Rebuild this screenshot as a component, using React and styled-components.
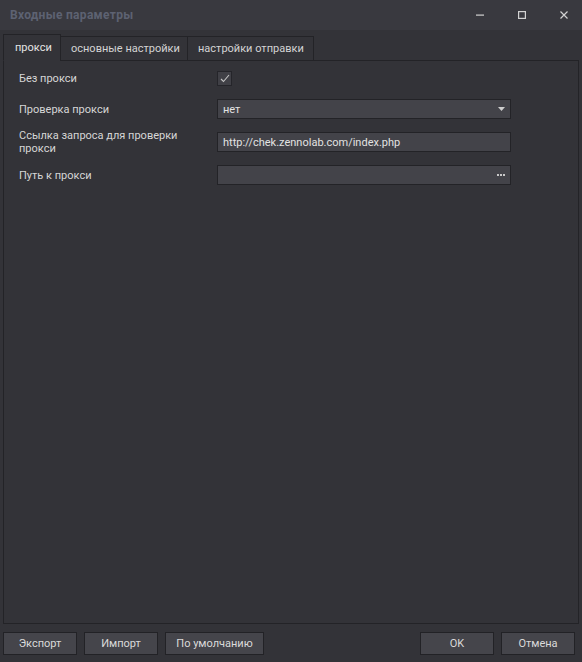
import React from "react";
import styled, { createGlobalStyle } from "styled-components";

const Global = createGlobalStyle`
  html, body { margin: 0; padding: 0; background: #333338; }
  * { box-sizing: border-box; }
  body { font-family: Roboto, "Noto Sans", sans-serif; font-size: 11px; color: #d8d8d8; }
`;

const Window = styled.div`
  width: 582px;
  height: 662px;
  display: flex;
  flex-direction: column;
  background: #333338;
`;

const TitleBar = styled.div`
  height: 30px;
  flex: none;
  background: #39393f;
  display: flex;
  align-items: center;
  justify-content: space-between;
  padding: 0 14px 0 10px;
`;

const Title = styled.div`
  font-weight: bold;
  font-size: 12px;
  color: #5d6272;
  letter-spacing: 0.3px;
`;

const Controls = styled.div`
  display: flex;
  gap: 34px;
  align-items: center;
`;

const Ctrl = styled.svg`
  width: 8px;
  height: 8px;
  display: block;
`;

const Body = styled.div`
  flex: 1;
  display: flex;
  flex-direction: column;
  padding: 4px 3px 0 3px;
  min-height: 0;
`;

const TabRow = styled.div`
  display: flex;
  align-items: flex-end;
  height: 27px;
  flex: none;
  position: relative;
  z-index: 1;
  margin-bottom: -1px;
`;

const Tab = styled.div`
  width: ${(p) => p.$w}px;
  height: ${(p) => (p.$active ? 27 : 25)}px;
  border: 1px solid #232327;
  border-bottom: ${(p) => (p.$active ? "1px solid #333338" : "1px solid #232327")};
  background: #333338;
  display: flex;
  align-items: center;
  padding-left: ${(p) => p.$pad}px;
  padding-bottom: ${(p) => (p.$active ? 1 : 0)}px;
  color: ${(p) => (p.$active ? "#e4e4e4" : "#d4d4d4")};
  white-space: nowrap;
  margin-left: ${(p) => (p.$first ? 0 : -1)}px;
`;

const Panel = styled.div`
  flex: 1;
  border: 1px solid #232327;
  padding: 10px 0 0 15px;
  display: flex;
  flex-direction: column;
  gap: 13px;
`;

const Row = styled.div`
  display: flex;
  align-items: center;
  height: ${(p) => p.$h || 20}px;
`;

const Label = styled.div`
  width: 198px;
  flex: none;
  color: #d6d6d6;
  line-height: 13px;
`;

const Check = styled.div`
  width: 15px;
  height: 15px;
  border: 1px solid #25252a;
  background: #404046;
  display: flex;
  align-items: center;
  justify-content: center;
`;

const Field = styled.div`
  width: 294px;
  height: 20px;
  border: 1px solid #232327;
  background: #434349;
  display: flex;
  align-items: center;
  justify-content: space-between;
  padding: 0 5px 0 5px;
  color: #e2e2e2;
`;

const Dots = styled.div`
  display: flex;
  gap: 1px;
`;

const Dot = styled.span`
  width: 2px;
  height: 2px;
  background: #c8c8c8;
  display: block;
`;

const Footer = styled.div`
  flex: none;
  display: flex;
  align-items: center;
  padding: 8px 4px 7px 0;
  gap: 7px;
`;

const Spacer = styled.div`
  flex: 1;
`;

const Button = styled.div`
  width: ${(p) => p.$w || 74}px;
  height: 23px;
  border: 1px solid #222226;
  background: #45454b;
  color: #dadada;
  display: flex;
  align-items: center;
  justify-content: center;
`;

export default function App() {
  return (
    <>
      <Global />
      <Window>
        <TitleBar>
          <Title>Входные параметры</Title>
          <Controls>
            <Ctrl viewBox="0 0 8 8">
              <rect x="0" y="3.5" width="8" height="1.2" fill="#d2d2d2" />
            </Ctrl>
            <Ctrl viewBox="0 0 8 8">
              <rect x="0.6" y="0.6" width="6.8" height="6.8" fill="none" stroke="#d2d2d2" strokeWidth="1.2" />
            </Ctrl>
            <Ctrl viewBox="0 0 8 8">
              <path d="M0.5 0.5 L7.5 7.5 M7.5 0.5 L0.5 7.5" stroke="#d2d2d2" strokeWidth="1.2" />
            </Ctrl>
          </Controls>
        </TitleBar>
        <Body>
          <TabRow>
            <Tab $active $first $w={58} $pad={11}>прокси</Tab>
            <Tab $w={128} $pad={10}>основные настройки</Tab>
            <Tab $w={127} $pad={10}>настройки отправки</Tab>
          </TabRow>
          <Panel>
            <Row $h={15}>
              <Label>Без прокси</Label>
              <Check>
                <svg width="10" height="9" viewBox="0 0 10 9">
                  <path d="M1 5 L3.5 7.5 L9 1" fill="none" stroke="#c4c4c4" strokeWidth="1.1" />
                </svg>
              </Check>
            </Row>
            <Row>
              <Label>Проверка прокси</Label>
              <Field>
                <span>нет</span>
                <svg width="7" height="4" viewBox="0 0 7 4">
                  <path d="M0 0 H7 L3.5 4 Z" fill="#cfcfcf" />
                </svg>
              </Field>
            </Row>
            <Row>
              <Label>
                Ссылка запроса для проверки
                <br />
                прокси
              </Label>
              <Field>
                <span>http://chek.zennolab.com/index.php</span>
              </Field>
            </Row>
            <Row>
              <Label>Путь к прокси</Label>
              <Field>
                <span />
                <Dots>
                  <Dot />
                  <Dot />
                  <Dot />
                </Dots>
              </Field>
            </Row>
          </Panel>
          <Footer>
            <Button>Экспорт</Button>
            <Button>Импорт</Button>
            <Button $w={99}>По умолчанию</Button>
            <Spacer />
            <Button>OK</Button>
            <Button>Отмена</Button>
          </Footer>
        </Body>
      </Window>
    </>
  );
}
